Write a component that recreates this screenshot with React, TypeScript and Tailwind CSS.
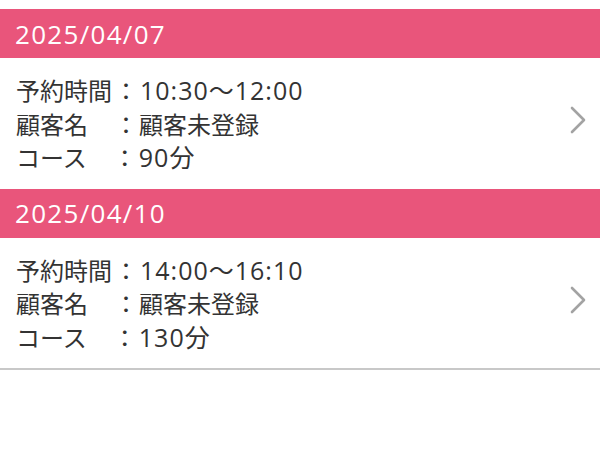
const reservations = [
  { date: '2025/04/07', time: '10:30～12:00', customer: '顧客未登録', course: '90分' },
  { date: '2025/04/10', time: '14:00～16:10', customer: '顧客未登録', course: '130分' },
];

function Chevron() {
  return (
    <svg width="18" height="28" viewBox="0 0 18 28" fill="none" className="mb-[8px] shrink-0">
      <path d="M3 2 L15 14 L3 26" stroke="#a3a3a3" strokeWidth="2.6" strokeLinecap="round" strokeLinejoin="round" />
    </svg>
  );
}

export default function App() {
  return (
    <div
      className="h-[454px] w-[600px] bg-white pt-[9px] text-[#333333] [text-spacing-trim:space-all]"
      style={{ fontFamily: '"Open Sans", "Noto Sans CJK JP", sans-serif' }}
    >
      <ul className="border-b-2 border-[#c8c8c8]">
        {reservations.map((r) => (
          <li key={r.date}>
            {/* Date header */}
            <div className="flex h-[49px] items-center bg-[#e9557b] px-[15px] text-[26px] leading-none tracking-[1.3px] text-white">
              {r.date}
            </div>
            {/* Details */}
            <div className="flex items-center justify-between pl-[16px] pr-[13px] pt-[16px] pb-[14px]">
              <div className="text-[24px] leading-[33.5px]">
                <p>
                  予約時間<span className="ml-[2px]">：</span>
                  <span className="ml-[2px] text-[25px] tracking-[1px]">{r.time}</span>
                </p>
                <p>
                  顧客名　<span className="ml-[2px]">：</span>
                  <span className="ml-[1px]">{r.customer}</span>
                </p>
                <p>
                  コース　<span className="ml-[2px]">：</span>
                  <span className="ml-[2px] text-[25px] tracking-[1px]">{r.course}</span>
                </p>
              </div>
              <Chevron />
            </div>
          </li>
        ))}
      </ul>
    </div>
  );
}
